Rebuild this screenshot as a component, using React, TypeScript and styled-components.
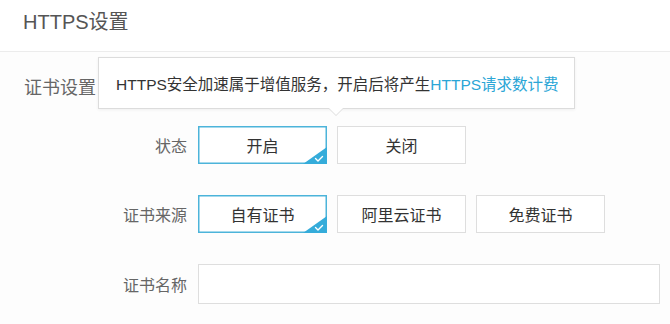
import { FC, useState } from "react";
import styled, { createGlobalStyle } from "styled-components";

const GlobalStyle = createGlobalStyle`
  html, body {
    margin: 0;
    padding: 0;
    background: #fdfdfd;
  }
  body {
    font-family: "Liberation Sans", "Noto Sans CJK SC", sans-serif;
  }
`;

const ACCENT = "#35acda";

type OptionProps = {
  label: string;
  selected?: boolean;
  onClick?: () => void;
};

const Option: FC<OptionProps> = ({ label, selected, onClick }) => (
  <StyledOption selected={!!selected} onClick={onClick}>
    {label}
    {selected && (
      <CornerMark viewBox="0 0 24 17" width="24" height="17">
        <path d="M24 0 L24 17 L0 17 Z" fill={ACCENT} />
        <path
          d="M12.5 11.5 L15 14 L19.5 9.5"
          fill="none"
          stroke="#fff"
          strokeWidth="1.4"
          strokeLinecap="round"
          strokeLinejoin="round"
        />
      </CornerMark>
    )}
  </StyledOption>
);

const App: FC = () => {
  const [status, setStatus] = useState("on");
  const [source, setSource] = useState("own");

  return (
    <Page>
      <GlobalStyle />
      <Header>HTTPS设置</Header>
      <Section>
        <SectionTitle>证书设置</SectionTitle>
        <Tooltip>
          HTTPS安全加速属于增值服务，开启后将产生
          <Highlight>HTTPS请求数计费</Highlight>
        </Tooltip>
        <Form>
          <Label>状态</Label>
          <Options>
            <Option label="开启" selected={status === "on"} onClick={() => setStatus("on")} />
            <Option label="关闭" selected={status === "off"} onClick={() => setStatus("off")} />
          </Options>

          <Label>证书来源</Label>
          <Options>
            <Option label="自有证书" selected={source === "own"} onClick={() => setSource("own")} />
            <Option label="阿里云证书" selected={source === "aliyun"} onClick={() => setSource("aliyun")} />
            <Option label="免费证书" selected={source === "free"} onClick={() => setSource("free")} />
          </Options>

          <Label>证书名称</Label>
          <TextInput />
        </Form>
      </Section>
    </Page>
  );
};

export default App;

const Page = styled.div`
  width: 670px;
  height: 324px;
  overflow: hidden;
  background: #fdfdfd;
`;

const Header = styled.div`
  height: 42px;
  padding: 9px 0 0 23px;
  box-sizing: content-box;
  font-size: 20px;
  line-height: 26px;
  color: #555;
  background: #fff;
  border-bottom: 1px solid #ececec;
`;

const Section = styled.div`
  position: relative;
  padding-top: 24px;
`;

const SectionTitle = styled.div`
  padding-left: 24px;
  font-size: 18px;
  line-height: 24px;
  color: #666;
`;

const Tooltip = styled.div`
  position: absolute;
  left: 98px;
  top: 5px;
  width: 477px;
  height: 52px;
  box-sizing: border-box;
  padding-left: 17px;
  display: flex;
  align-items: center;
  font-size: 15.5px;
  color: #333;
  background: #fff;
  border: 1px solid #dcdcdc;
  box-shadow: 0 1px 3px rgba(0, 0, 0, 0.06);
  white-space: nowrap;

  &::before,
  &::after {
    content: "";
    position: absolute;
    left: 230px;
    width: 0;
    height: 0;
    border-left: 7px solid transparent;
    border-right: 7px solid transparent;
  }
  &::before {
    top: 51px;
    border-top: 7px solid #dcdcdc;
  }
  &::after {
    top: 50px;
    border-top: 7px solid #fff;
  }
`;

const Highlight = styled.span`
  color: #2ba6d6;
`;

const Form = styled.div`
  display: grid;
  grid-template-columns: 187px 462px;
  column-gap: 11px;
  row-gap: 31px;
  align-items: center;
  margin-top: 26px;
`;

const Label = styled.div`
  text-align: right;
  font-size: 16px;
  color: #666;
`;

const Options = styled.div`
  display: flex;
  gap: 10px;
`;

const StyledOption = styled.div<{ selected: boolean }>`
  position: relative;
  width: 129px;
  height: 38px;
  box-sizing: border-box;
  display: flex;
  align-items: center;
  justify-content: center;
  font-size: 16px;
  color: #333;
  background: #fff;
  border: 1px solid ${({ selected }) => (selected ? "#4cb4da" : "#dedede")};
  ${({ selected }) => (selected ? "box-shadow: inset 0 0 0 0.5px #4cb4da;" : "")}
  cursor: pointer;
`;

const CornerMark = styled.svg`
  position: absolute;
  right: -1px;
  bottom: -1px;
`;

const TextInput = styled.input`
  width: 462px;
  height: 40px;
  box-sizing: border-box;
  border: 1px solid #dedede;
  background: #fff;
  outline: none;
  padding: 0 10px;
  font-size: 15px;
`;
